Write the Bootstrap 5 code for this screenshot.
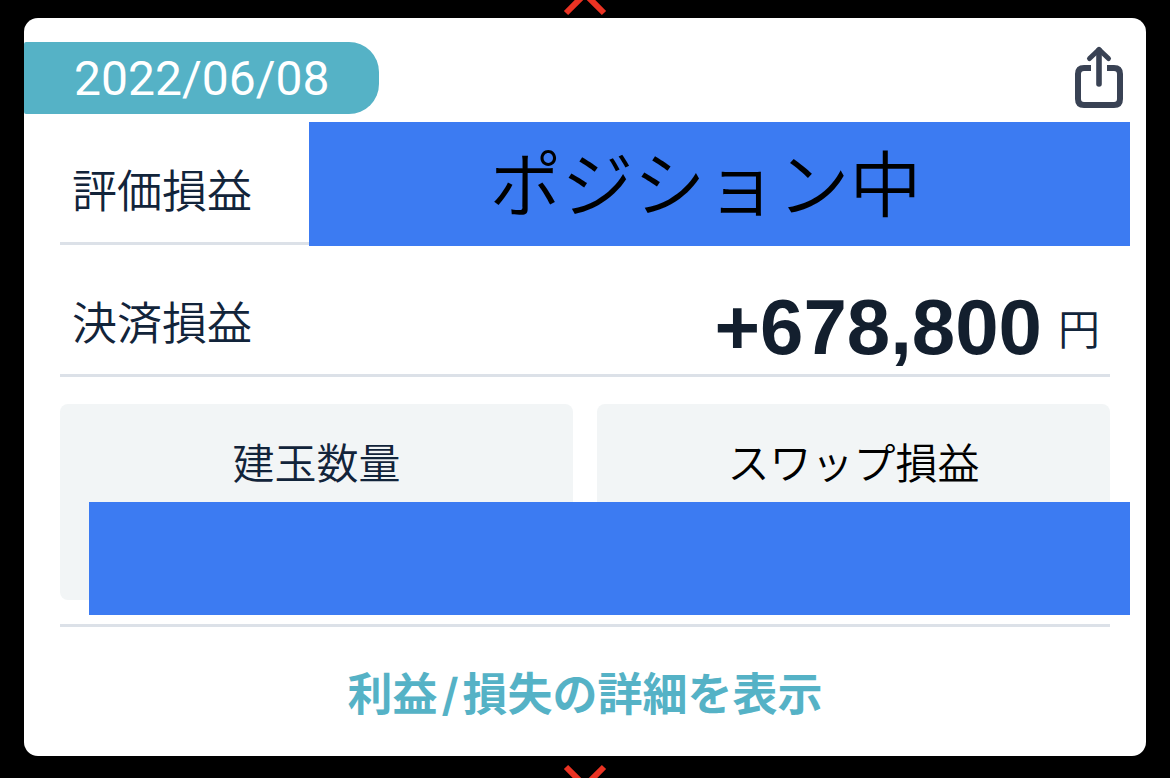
<!DOCTYPE html>
<html lang="ja">
<head>
<meta charset="utf-8">
<meta name="viewport" content="width=device-width, initial-scale=1">
<title>損益</title>
<link href="https://cdn.jsdelivr.net/npm/bootstrap@5.3.0/dist/css/bootstrap.min.css" rel="stylesheet">
<style>
  body { background: #000; color: #12243a; font-family: Inter, "Noto Sans CJK JP", sans-serif; font-weight: 350; }
  .edge-top, .edge-bottom { line-height: 0; overflow: hidden; }
  .edge-top { height: 18px; }
  .edge-bottom { height: 22px; }
  .pl-card { background: #fff; border-radius: 14px; padding-top: 24px; }
  .date-pill { background: #55b2c6; color: #fff; font-family: Roboto, sans-serif; font-weight: 400; font-size: 48px; line-height: 74px; height: 72px; padding: 0 50px; border-radius: 2px 30px 30px 2px; }
  .share-btn { color: #394254; margin-right: 22px; line-height: 0; }
  .pl-body { padding: 0 36px; }
  .pl-row { border-bottom: 3px solid #dce1e8; padding: 0 10px 0 12px; }
  .row-open { height: 131px; }
  .row-closed { height: 132px; }
  .pl-label { font-size: 45px; line-height: 64px; padding-bottom: 18px; }
  .amount { font-family: "Liberation Sans", sans-serif; font-weight: 700; font-size: 78px; line-height: 94px; color: #131f2e; }
  .unit { font-size: 42px; line-height: 60px; padding-bottom: 14px; }
  .cover { background: #3c7bf2; color: #000; }
  .cover-open { top: 8px; right: -20px; bottom: -4px; left: 249px; padding: 2px 28px 0 0; font-size: 72px; line-height: 100px; }
  .cover-tiles { top: 98px; right: -20px; bottom: -15px; left: 29px; }
  .tiles { margin: 27px 0 24px; gap: 24px; }
  .tile { background: #f2f5f6; border-radius: 8px; height: 196px; padding-top: 30px; font-size: 42px; line-height: 60px; }
  .detail-link { border-top: 3px solid #dce1e8; color: #55b2c6; font-size: 45px; font-weight: 600; line-height: 64px; padding: 36px 0 29px; }
  .detail-link:hover { color: #3d9bb0; }
</style>
</head>
<body>
<div class="edge-top text-center" aria-hidden="true">
  <svg width="44" height="18" viewBox="0 0 44 18" fill="none" stroke="#ea3323" stroke-width="6"><path d="M3 13 22-6 41 13"/></svg>
</div>
<main class="pl-card mx-4">
  <header class="d-flex justify-content-between align-items-start">
    <time class="date-pill" datetime="2022-06-08">2022/06/08</time>
    <button type="button" class="share-btn btn p-0 border-0" aria-label="共有">
      <svg width="50" height="68" viewBox="0 0 50 68" fill="none" stroke="currentColor">
        <path stroke-width="6" d="M17 26H10Q4 26 4 32V57Q4 63 10 63H40Q46 63 46 57V32Q46 26 40 26H33"/>
        <path stroke-width="5.600" stroke-linecap="round" stroke-linejoin="round" d="M25 42V8"/>
        <path stroke-width="5" stroke-linecap="round" stroke-linejoin="round" d="M15.500 16.500 25 7.500 34.500 16.500"/>
      </svg>
    </button>
  </header>
  <div class="pl-body">
    <section class="pl-row row-open position-relative d-flex align-items-end">
      <div class="pl-label">評価損益</div>
      <div class="cover cover-open position-absolute d-flex justify-content-center align-items-center">ポジション中</div>
    </section>
    <section class="pl-row row-closed d-flex justify-content-between align-items-end">
      <div class="pl-label">決済損益</div>
      <div class="d-flex align-items-end gap-3">
        <strong class="amount">+678,800</strong><span class="unit">円</span>
      </div>
    </section>
    <section class="tiles d-flex position-relative text-center">
      <div class="tile flex-fill w-50">建玉数量</div>
      <div class="tile flex-fill w-50 text-black">スワップ損益</div>
      <div class="cover cover-tiles position-absolute"></div>
    </section>
    <a href="#" class="detail-link d-block text-center text-decoration-none">利益<span class="mx-1">/</span>損失の詳細を表示</a>
  </div>
</main>
<div class="edge-bottom text-center" aria-hidden="true">
  <svg width="44" height="22" viewBox="0 0 44 22" fill="none" stroke="#ea3323" stroke-width="6"><path d="M3 11 22 30 41 11"/></svg>
</div>
<script src="https://cdn.jsdelivr.net/npm/bootstrap@5.3.0/dist/js/bootstrap.bundle.min.js"></script>
</body>
</html>
